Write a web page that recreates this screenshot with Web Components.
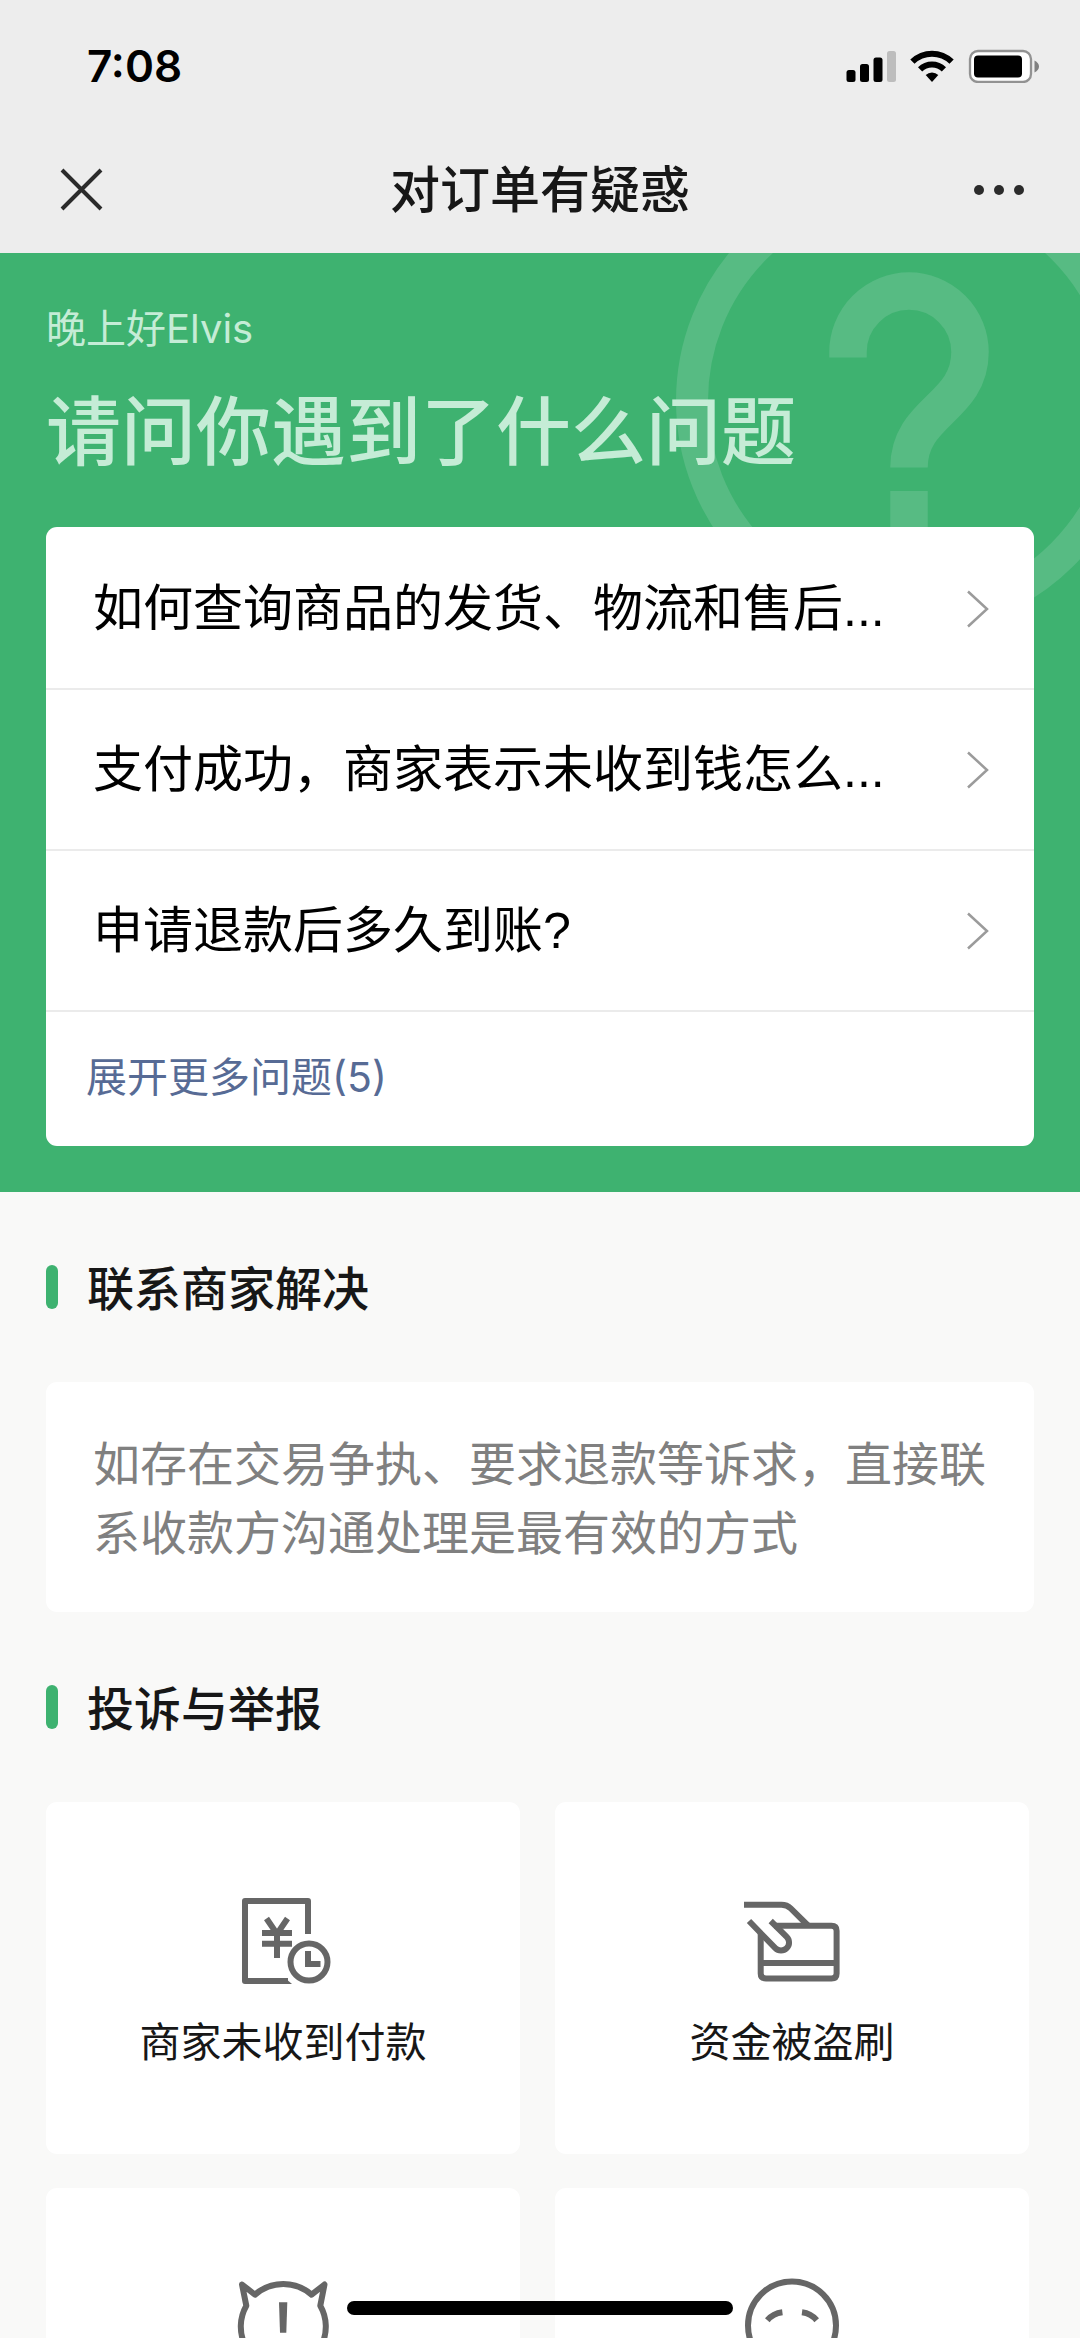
<!DOCTYPE html>
<html lang="zh-CN">
<head>
<meta charset="utf-8">
<meta name="viewport" content="width=device-width, initial-scale=1">
<title>对订单有疑惑</title>
<style>
html, body { margin: 0; height: 100%; }
body { background: #f9f9f8; color: #171717; font-family: Inter, "Noto Sans CJK SC", sans-serif; }
</style>
</head>
<body>
<help-app></help-app>
<script>
function define(name, html) {
  const tpl = document.createElement('template');
  tpl.innerHTML = html;
  customElements.define(name, class extends HTMLElement {
    constructor() {
      super();
      this.attachShadow({ mode: 'open' }).append(tpl.content.cloneNode(true));
    }
  });
}

define('status-bar', `
<style>
:host { display: flex; align-items: center; justify-content: space-between; height: 132px; padding: 0 41px 0 87px; color: #000; }
time { font-size: 44px; font-weight: 600; line-height: 60px; }
svg { display: block; }
</style>
<time>7:08</time>
<svg width="193" height="34" viewBox="846 49 193 34" aria-hidden="true">
  <rect x="846.500" y="70" width="9" height="12" rx="2.500"/>
  <rect x="860" y="64" width="9" height="18" rx="2.500"/>
  <rect x="873.500" y="57.500" width="9" height="24.500" rx="2.500"/>
  <rect x="887" y="51" width="9" height="31" rx="2.500" fill="#bdbdbd"/>
  <path d="M910.300 59.500A31 31 0 0 1 953.700 59.500L949.500 63.800A25 25 0 0 0 914.500 63.800Z"/>
  <path d="M918 67.300A20 20 0 0 1 946 67.300L941.800 71.600A14 14 0 0 0 922.200 71.600Z"/>
  <path d="M925.700 75A9 9 0 0 1 938.300 75L932 82Z"/>
  <rect x="970" y="51" width="61" height="31" rx="8" fill="#fff" stroke="#929292" stroke-width="2.300"/>
  <rect x="974" y="55.500" width="48" height="22" rx="4"/>
  <path d="M1034.500 60.500Q1039 63 1039 66.500T1034.500 72.500Z" fill="#808080"/>
</svg>`);

define('nav-bar', `
<style>
:host { display: grid; grid-template-columns: 1fr auto 1fr; align-items: center; height: 116px; padding: 0 54px 5px; }
h1 { margin: 0; font-size: 50px; line-height: 70px; font-weight: 500; }
button { border: 0; padding: 0; background: none; display: block; justify-self: start; }
button:last-child { justify-self: end; }
svg { display: block; }
</style>
<button aria-label="关闭"><svg width="56" height="56" viewBox="0 0 56 56" stroke="#2b2b2b" stroke-width="4"><path d="M8 8L47 47M47 8L8 47"/></svg></button>
<h1><slot></slot></h1>
<button aria-label="更多"><svg width="56" height="56" viewBox="0 0 56 56" fill="#2b2b2b"><circle cx="9" cy="28" r="5"/><circle cx="29" cy="28" r="5"/><circle cx="49" cy="28" r="5"/></svg></button>`);

define('question-row', `
<style>
:host { display: block; border-bottom: 2px solid #ebebeb; }
a { display: flex; align-items: center; justify-content: space-between; height: 159px; padding: 0 45px 0 47px; color: #000; text-decoration: none; font-family: "Liberation Sans", "Noto Sans CJK SC", sans-serif; font-size: 50px; line-height: 70px; white-space: nowrap; }
svg { display: block; flex: none; }
</style>
<a href="#"><span><slot></slot></span><svg width="23" height="40" viewBox="0 0 23 40" fill="none" stroke="#9b9b9b" stroke-width="2.500"><path d="M2 2.500L21 20L2 37.500"/></svg></a>`);

define('help-hero', `
<style>
:host { display: block; position: relative; overflow: hidden; background: #3eb270; padding: 46px; }
.mark { position: absolute; top: 0; right: 0; }
.body { position: relative; }
p { margin: 0 0 21px; font-size: 40px; line-height: 60px; color: #c5ecd6; }
h2 { margin: 0 0 44px; font-size: 75px; line-height: 103px; font-weight: 500; color: #c5ecd6; }
.card { background: #fff; border-radius: 11px; padding-top: 2px; }
button { display: block; width: 100%; height: 134px; padding: 0 40px 4px; border: 0; background: none; text-align: left; font: inherit; font-size: 41px; line-height: 58px; color: #576b95; }
</style>
<svg class="mark" width="420" height="400" viewBox="660 253 420 400" fill="none" stroke="#57bb83" aria-hidden="true">
  <circle cx="909" cy="401" r="217" stroke-width="32"/>
  <path d="M848 357.500V352A61 61 0 0 1 970 352C970 408 909 411 909 467.500M909 491V529" stroke-width="37.500"/>
</svg>
<div class="body">
  <p><slot name="greeting"></slot></p>
  <h2><slot name="headline"></slot></h2>
  <div class="card"><slot></slot><button><slot name="more"></slot></button></div>
</div>`);

define('section-block', `
<style>
:host { display: block; padding: 61px 46px 0; }
header { display: flex; align-items: center; gap: 29px; height: 68px; margin-bottom: 61px; }
header::before { content: ""; width: 12px; height: 44px; border-radius: 6px; background: #3eb270; }
h2 { margin: 0; padding-top: 3px; font-size: 47px; line-height: 65px; font-weight: 500; }
</style>
<header><h2><slot name="title"></slot></h2></header>
<slot></slot>`);

define('info-card', `
<style>
:host { display: block; background: #fff; border-radius: 11px; padding: 47px 47px 45px; font-size: 47px; line-height: 69px; color: #808080; }
</style>
<slot></slot>`);

define('tile-grid', `
<style>
:host { display: grid; grid-template-columns: 1fr 1fr; grid-auto-rows: 352px; gap: 34px 35px; padding-right: 5px; }
</style>
<slot></slot>`);

define('report-tile', `
<style>
:host { display: block; }
button { display: flex; flex-direction: column; align-items: center; gap: 26px; width: 100%; height: 100%; padding: 89px 0 0; border: 0; border-radius: 11px; background: #fff; color: #171717; font: inherit; font-size: 41px; line-height: 58px; }
::slotted(svg) { display: block; width: 96px; height: 96px; fill: none; stroke: #666; stroke-width: 6; }
</style>
<button><slot name="icon"></slot><span><slot></slot></span></button>`);

define('home-indicator', `
<style>
:host { position: fixed; left: 50%; bottom: 23px; width: 386px; height: 14px; margin-left: -193px; border-radius: 7px; background: #000; }
</style>`);

define('help-app', `
<style>
:host { display: flex; flex-direction: column; height: 100vh; }
.top { background: #ededed; flex: none; }
main { flex: 1; min-height: 0; overflow-y: auto; scrollbar-width: none; }
</style>
<div class="top"><status-bar></status-bar><nav-bar>对订单有疑惑</nav-bar></div>
<main>
  <help-hero>
    <span slot="greeting">晚上好Elvis</span>
    <span slot="headline">请问你遇到了什么问题</span>
    <question-row>如何查询商品的发货、物流和售后...</question-row>
    <question-row>支付成功，商家表示未收到钱怎么...</question-row>
    <question-row>申请退款后多久到账?</question-row>
    <span slot="more">展开更多问题(5)</span>
  </help-hero>
  <section-block>
    <span slot="title">联系商家解决</span>
    <info-card>如存在交易争执、要求退款等诉求，直接联系收款方沟通处理是最有效的方式</info-card>
  </section-block>
  <section-block>
    <span slot="title">投诉与举报</span>
    <tile-grid>
      <report-tile>
        <svg slot="icon" viewBox="0 0 96 96">
          <path d="M73 43V10H10V90H53" stroke-linejoin="round"/>
          <path d="M50 87L57 93H50Z" fill="#666" stroke="none"/>
          <path d="M31.500 27.500L42 43L52.500 27.500M27 42H57M27 52.700H57M42 40V67"/>
          <circle cx="74" cy="71" r="18.500"/>
          <path d="M73 60V73H85.500"/>
        </svg>商家未收到付款</report-tile>
      <report-tile>
        <svg slot="icon" viewBox="0 0 96 96">
          <path d="M0 13.700H37.500Q43 13.700 46.700 17.300L64 34.500"/>
          <path d="M30 34.700H87.500Q92.600 34.700 92.600 39.700V82.500Q92.600 87.500 87.500 87.500H22Q16.700 87.500 16.700 82.500V42M16.700 72H92.600"/>
          <path d="M5 30L31.300 57.200A8 8 0 0 0 42.700 45.800L26.700 30"/>
        </svg>资金被盗刷</report-tile>
      <report-tile>
        <svg slot="icon" viewBox="0 0 96 96">
          <path stroke-linejoin="round" d="M20 17.700A42.500 42.500 0 0 1 76.600 17.700L89.500 7.500L85.300 28.700A42.500 42.500 0 1 1 11.300 28.700L7 7.500Z"/>
          <path d="M44 25.300H52.300L51.300 55.700H45Z" fill="#666" stroke="none"/>
        </svg></report-tile>
      <report-tile>
        <svg slot="icon" viewBox="0 0 96 96">
          <circle cx="48" cy="48.500" r="44"/>
          <path d="M23.300 43.300Q29 36.500 38.400 35.300M58 35.300Q67 36.500 72.700 43.300"/>
        </svg></report-tile>
    </tile-grid>
  </section-block>
</main>
<home-indicator></home-indicator>`);
</script>
</body>
</html>
